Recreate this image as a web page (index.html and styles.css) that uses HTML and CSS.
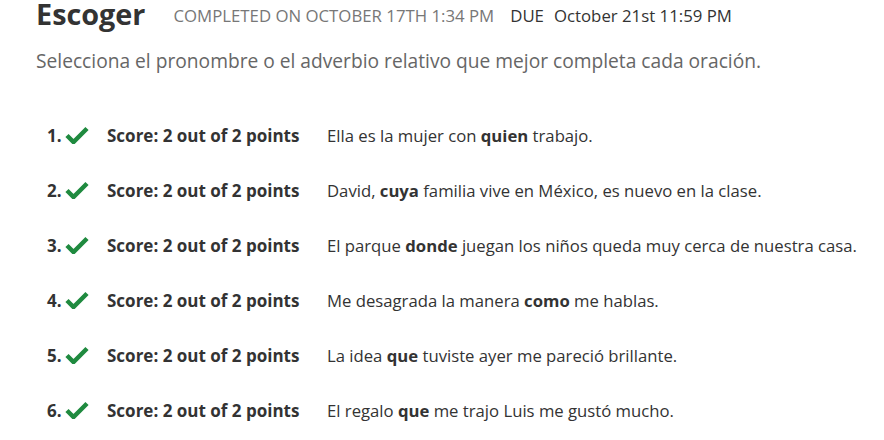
FILE: index.html
```html
<!DOCTYPE html>
<html lang="es">
<head>
    <meta charset="UTF-8">
    <title>Escoger</title>
    <link rel="stylesheet" href="styles.css">
</head>
<body>
    <div class="activity">
        <header class="header">
            <h1>Escoger</h1>
            <span class="completed">COMPLETED ON OCTOBER 17TH 1:34 PM</span>
            <span class="due-label">DUE</span>
            <span class="due-date">October 21st 11:59 PM</span>
        </header>

        <p class="instructions">Selecciona el pronombre o el adverbio relativo que mejor completa cada oración.</p>

        <ol class="questions">
            <li class="question">
                <span class="num">1.</span>
                <svg class="check" viewBox="0 0 24 18"><path d="M2 9.5 L8.5 16 L22 2.5" /></svg>
                <span class="score">Score: 2 out of 2 points</span>
                <span class="sentence">Ella es la mujer con <b>quien</b> trabajo.</span>
            </li>
            <li class="question">
                <span class="num">2.</span>
                <svg class="check" viewBox="0 0 24 18"><path d="M2 9.5 L8.5 16 L22 2.5" /></svg>
                <span class="score">Score: 2 out of 2 points</span>
                <span class="sentence">David, <b>cuya</b> familia vive en México, es nuevo en la clase.</span>
            </li>
            <li class="question">
                <span class="num">3.</span>
                <svg class="check" viewBox="0 0 24 18"><path d="M2 9.5 L8.5 16 L22 2.5" /></svg>
                <span class="score">Score: 2 out of 2 points</span>
                <span class="sentence">El parque <b>donde</b> juegan los niños queda muy cerca de nuestra casa.</span>
            </li>
            <li class="question">
                <span class="num">4.</span>
                <svg class="check" viewBox="0 0 24 18"><path d="M2 9.5 L8.5 16 L22 2.5" /></svg>
                <span class="score">Score: 2 out of 2 points</span>
                <span class="sentence">Me desagrada la manera <b>como</b> me hablas.</span>
            </li>
            <li class="question">
                <span class="num">5.</span>
                <svg class="check" viewBox="0 0 24 18"><path d="M2 9.5 L8.5 16 L22 2.5" /></svg>
                <span class="score">Score: 2 out of 2 points</span>
                <span class="sentence">La idea <b>que</b> tuviste ayer me pareció brillante.</span>
            </li>
            <li class="question">
                <span class="num">6.</span>
                <svg class="check" viewBox="0 0 24 18"><path d="M2 9.5 L8.5 16 L22 2.5" /></svg>
                <span class="score">Score: 2 out of 2 points</span>
                <span class="sentence">El regalo <b>que</b> me trajo Luis me gustó mucho.</span>
            </li>
        </ol>
    </div>
</body>
</html>
```

FILE: styles.css
```css
* {
    margin: 0;
    padding: 0;
    box-sizing: border-box;
}

body {
    font-family: "Open Sans", sans-serif;
    background: #fff;
    color: #333;
}

.activity {
    padding: 0 0 0 36px;
}

.header {
    display: flex;
    align-items: flex-start;
    height: 34px;
}

.header h1 {
    font-size: 28.8px;
    font-weight: 700;
    color: #333;
    line-height: 28px;
    margin-right: 28px;
}

.completed,
.due-label,
.due-date {
    font-size: 16.8px;
    line-height: 23px;
    margin-top: 3.5px;
}

.completed {
    color: #777;
    margin-right: 16px;
}

.due-label {
    color: #333;
    margin-right: 10px;
}

.due-date {
    color: #333;
}

.instructions {
    font-size: 19.2px;
    color: #666;
    margin-top: 13px;
    line-height: 28px;
}

.questions {
    list-style: none;
    margin-top: 33px;
}

.question {
    display: flex;
    align-items: center;
    height: 55px;
    padding-left: 11px;
}

.num {
    font-size: 17px;
    font-weight: 700;
    color: #333;
    width: 18px;
}

.check {
    width: 24px;
    height: 18px;
    margin: 0 18px 2px 0;
}

.check path {
    fill: none;
    stroke: #1f8a3f;
    stroke-width: 4.5;
}

.score {
    font-size: 17px;
    font-weight: 700;
    color: #333;
    width: 220px;
}

.sentence {
    font-size: 16.7px;
    color: #333;
}

.sentence b {
    font-weight: 700;
}
```
